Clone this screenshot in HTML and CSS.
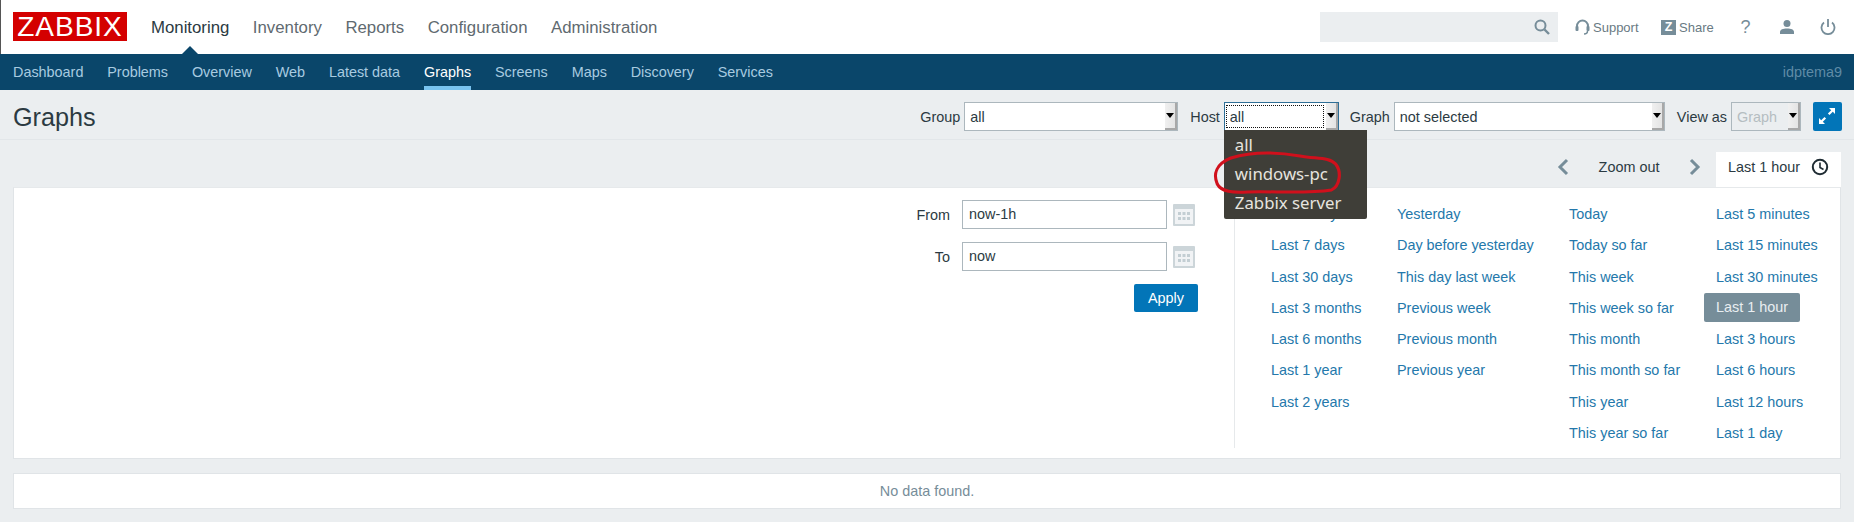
FILE: index.html
```html
<!DOCTYPE html>
<html lang="en">
<head>
<meta charset="utf-8">
<title>Graphs</title>
<link rel="stylesheet" href="styles.css">
</head>
<body>
<header class="top">
  <div class="logo">ZABBIX</div>
  <nav class="main-nav">
    <a class="active">Monitoring</a><a>Inventory</a><a>Reports</a><a>Configuration</a><a>Administration</a>
  </nav>
  <div class="search">
    <svg class="ico" width="18" height="18" viewBox="0 0 18 18"><circle cx="7.5" cy="7.5" r="5" fill="none" stroke="#768d99" stroke-width="2"/><path d="M11.5 11.5L16 16" stroke="#768d99" stroke-width="2.4"/></svg>
  </div>
  <a class="tool support"><svg width="15" height="17" viewBox="0 0 15 17"><path d="M2 11V7a5.500 5.500 0 0 1 11 0v4" fill="none" stroke="#768d99" stroke-width="2"/><rect x="0.500" y="7" width="3" height="5" rx="1" fill="#768d99"/><rect x="11.500" y="7" width="3" height="5" rx="1" fill="#768d99"/><path d="M12.500 12q0 3-3.500 3" fill="none" stroke="#768d99" stroke-width="1.500"/></svg>Support</a>
  <a class="tool share"><span class="zbox">Z</span>Share</a>
  <a class="tool-ico help">?</a>
  <a class="tool-ico"><svg width="16" height="16" viewBox="0 0 16 16"><circle cx="8" cy="4.500" r="3.500" fill="#768d99"/><path d="M1 15v-2c0-2.500 3-3.500 7-3.500s7 1 7 3.500v2z" fill="#768d99"/></svg></a>
  <a class="tool-ico"><svg width="16" height="16" viewBox="0 0 16 16"><path d="M4 3.500a6.500 6.500 0 1 0 8 0" fill="none" stroke="#768d99" stroke-width="1.800"/><path d="M8 0v8" stroke="#768d99" stroke-width="1.800"/></svg></a>
</header>
<nav class="sub-nav">
  <a>Dashboard</a><a>Problems</a><a>Overview</a><a>Web</a><a>Latest data</a><a class="active">Graphs</a><a>Screens</a><a>Maps</a><a>Discovery</a><a>Services</a>
  <span class="server">idptema9</span>
</nav>
<section class="title-row">
  <h1>Graphs</h1>
  <form class="filters">
    <label>Group</label><div class="select w-group"><span>all</span><i class="arrow"></i></div>
    <label class="gap">Host</label>
    <div class="select w-host focus"><span class="dotted">all</span><i class="arrow"></i>
      <ul class="menu"><li>all</li><li>windows-pc</li><li>Zabbix server</li></ul>
      <svg class="scribble" width="132" height="46" viewBox="0 0 126 46" preserveAspectRatio="none"><path d="M18 8C40 1 62 2 84 6C100 9 112 7 118 14C124 22 122 36 114 40C90 44 58 41 34 42C20 43 9 42 5 34C1 24 4 14 18 8Z" fill="none" stroke="#d0101c" stroke-width="3"/></svg>
    </div>
    <label class="gap graph-label">Graph</label><div class="select w-graph"><span>not selected</span><i class="arrow"></i></div>
    <label class="gap">View as</label><div class="select w-view disabled"><span>Graph</span><i class="arrow"></i></div>
    <button type="button" class="fullscreen"><svg width="22" height="22" viewBox="0 0 22 22"><path d="M13 3h6v6l-2.200-2.200-3.300 3.300-1.600-1.600 3.300-3.300zM9 19H3v-6l2.200 2.200 3.300-3.300 1.600 1.600-3.300 3.300z" fill="#fff"/></svg></button>
  </form>
</section>
<div class="tabs">
  <svg width="12" height="18" viewBox="0 0 12 18"><path d="M10 2L3 9l7 7" fill="none" stroke="#768d99" stroke-width="3"/></svg>
  <span class="zoom-out">Zoom out</span>
  <svg width="12" height="18" viewBox="0 0 12 18"><path d="M2 2l7 7-7 7" fill="none" stroke="#768d99" stroke-width="3"/></svg>
  <div class="tab">Last 1 hour<svg width="18" height="18" viewBox="0 0 18 18"><circle cx="9" cy="9" r="7.200" fill="none" stroke="#1f2c33" stroke-width="2"/><path d="M9 4.500V9.500L12.500 11.500" fill="none" stroke="#1f2c33" stroke-width="1.600"/></svg></div>
</div>
<main class="panel">
  <div class="range">
    <div class="range-row"><label>From</label><div class="input">now-1h</div>
      <svg class="cal" width="22" height="22" viewBox="0 0 22 22"><rect x="0" y="0" width="22" height="22" rx="1" fill="#ccd5d9"/><rect x="2" y="5" width="18" height="15" fill="#f1f3f5"/><g fill="#c3ced3"><rect x="5" y="8" width="3" height="3"/><rect x="9.500" y="8" width="3" height="3"/><rect x="14" y="8" width="3" height="3"/><rect x="5" y="13" width="3" height="3"/><rect x="9.500" y="13" width="3" height="3"/><rect x="14" y="13" width="3" height="3"/></g></svg></div>
    <div class="range-row"><label>To</label><div class="input">now</div>
      <svg class="cal" width="22" height="22" viewBox="0 0 22 22"><rect x="0" y="0" width="22" height="22" rx="1" fill="#ccd5d9"/><rect x="2" y="5" width="18" height="15" fill="#f1f3f5"/><g fill="#c3ced3"><rect x="5" y="8" width="3" height="3"/><rect x="9.500" y="8" width="3" height="3"/><rect x="14" y="8" width="3" height="3"/><rect x="5" y="13" width="3" height="3"/><rect x="9.500" y="13" width="3" height="3"/><rect x="14" y="13" width="3" height="3"/></g></svg></div>
    <button type="button" class="apply">Apply</button>
  </div>
  <div class="quick">
    <ul class="c1"><li>Last 2 days</li><li>Last 7 days</li><li>Last 30 days</li><li>Last 3 months</li><li>Last 6 months</li><li>Last 1 year</li><li>Last 2 years</li></ul>
    <ul class="c2"><li>Yesterday</li><li>Day before yesterday</li><li>This day last week</li><li>Previous week</li><li>Previous month</li><li>Previous year</li></ul>
    <ul class="c3"><li>Today</li><li>Today so far</li><li>This week</li><li>This week so far</li><li>This month</li><li>This month so far</li><li>This year</li><li>This year so far</li></ul>
    <ul class="c4"><li>Last 5 minutes</li><li>Last 15 minutes</li><li>Last 30 minutes</li><li class="sel">Last 1 hour</li><li>Last 3 hours</li><li>Last 6 hours</li><li>Last 12 hours</li><li>Last 1 day</li></ul>
  </div>
</main>
<div class="empty">No data found.</div>
</body>
</html>
```
FILE: styles.css
```css
* { box-sizing: border-box; }
html, body { margin: 0; height: 522px; overflow: hidden; }
body { background: #ebeef0; font: 14.4px "Liberation Sans", Arial, sans-serif; color: #2b3a42; }
ul { list-style: none; margin: 0; padding: 0; }

.top { height: 54px; background: #fff; display: flex; align-items: center; padding: 0 6px 0 12px; border-left: 1px solid #555; }
.logo { width: 114px; height: 29px; background: #d40000; color: #fff; font-size: 28px; line-height: 30px; text-align: center; letter-spacing: 1px; margin-top: -1px; }
.main-nav { display: flex; gap: 23.500px; margin: 1px 0 0 24px; font-size: 16.800px; color: #5f6a70; flex: 1; }
.main-nav .active { color: #2b3a42; position: relative; }
.main-nav .active::after { content: ""; position: absolute; left: 50%; margin-left: -9px; top: 28px; border: 9px solid transparent; border-top: 0; border-bottom-color: #0a466a; }
.search { width: 238px; height: 30px; background: #ebeef0; display: flex; justify-content: flex-end; align-items: center; padding-right: 7px; }
.tool { display: flex; align-items: center; font-size: 13px; color: #697a83; }
.support { margin-left: 17px; gap: 3px; width: 71px; }
.share { margin-left: 15px; gap: 3px; width: 55px; }
.zbox { width: 15px; height: 15px; background: #768d99; color: #fff; font-weight: bold; font-size: 12.500px; line-height: 15px; text-align: center; }
.tool-ico { width: 41px; display: flex; justify-content: center; color: #768d99; font-size: 18px; }
.help { margin-left: 9px; }

.sub-nav { height: 36px; background: #0a466a; display: flex; padding-left: 13px; gap: 23.850px; color: #a8cbe0; }
.sub-nav a { line-height: 36px; height: 36px; }
.sub-nav .active { color: #fff; border-bottom: 4px solid #79c3ef; }
.server { margin-left: auto; line-height: 36px; color: #5f8ba6; padding-right: 12px; }

.title-row { height: 50px; display: flex; align-items: center; justify-content: space-between; padding: 0 12px 0 13px; border-bottom: 1px solid #e2e6e9; }
h1 { margin: 6px 0 0; font-size: 25.200px; font-weight: normal; }
.filters { display: flex; align-items: center; margin-top: 4px; }
.filters label { margin-right: 4px; }
.filters .gap { margin-left: 12px; }
.filters .graph-label { margin-left: 11px; }
.select { height: 29px; background: #fff; border: 1px solid #acb7bd; display: flex; align-items: center; padding-left: 5px; position: relative; color: #2b3a42; }
.select > span { flex: 1; }
.arrow { width: 12px; height: 27px; background: linear-gradient(90deg, #f0f0f0, #e4e4e4); border-right: 2px solid #a8a8a8; border-bottom: 2px solid #a8a8a8; position: relative; }
.arrow::after { content: ""; position: absolute; left: 1px; top: 10px; border: 4px solid transparent; border-bottom: 0; border-top: 5px solid #000; }
.w-group { width: 214px; }
.w-host { width: 115px; }
.w-graph { width: 271px; }
.w-view { width: 70px; }
.focus { border-color: #2f6f97; padding-left: 1px; }
.dotted { border: 1px dotted #111; height: 23px; line-height: 22px; padding-left: 3px; margin-right: 2px; }
.disabled { background: #ebeef0; color: #b5bdc1; }
.fullscreen { width: 29px; height: 29px; margin-left: 12px; background: #0275b8; border: 0; border-radius: 2px; padding: 3px; display: flex; }

.menu { position: absolute; left: -1px; top: 27px; width: 143px; height: 89px; background: #3f3e38; color: #e6e4df; font: 16.800px "Noto Sans", sans-serif; border-radius: 0 0 2px 2px; padding: 0 0 0 11px; z-index: 5; }
.menu li { height: 29px; line-height: 29px; }
.scribble { position: absolute; left: -13px; top: 47px; z-index: 6; }

.tabs { height: 47px; display: flex; align-items: flex-end; justify-content: flex-end; padding-right: 13px; }
.tabs > svg { margin-bottom: 11px; }
.zoom-out { width: 120px; text-align: center; line-height: 35px; padding-bottom: 4px; height: 37px; }
.tabs > svg:last-of-type { margin-right: 15px; }
.tab { width: 125px; height: 35px; background: #fff; padding: 0 0 6px 12px; display: flex; gap: 11px; align-items: center; white-space: nowrap; }

.panel { margin: 0 13px; height: 272px; background: #fff; border: 1px solid #e0e4e7; border-top-color: #e6e9eb; display: flex; padding-top: 10px; position: relative; }
.range { width: 1221px; height: 250px; border-right: 1px solid #e6e9eb; padding-right: 36px; display: flex; flex-direction: column; align-items: flex-end; padding-top: 2px; }
.range-row { display: flex; align-items: center; height: 29px; margin: 0 3px 13px 0; }
.range-row label { margin-right: 12px; }
.input { width: 205px; height: 29px; border: 1px solid #acb7bd; line-height: 27px; padding-left: 6px; }
.cal { margin-left: 6px; }
.apply { width: 64px; height: 28px; background: #0275b8; color: #fff; font: 14.4px "Liberation Sans", sans-serif; border: 0; border-radius: 2px; }
.quick { display: flex; color: #2478ab; margin-left: 36px; }
.quick ul { flex: none; }
.quick li { height: 31.250px; line-height: 33px; white-space: nowrap; }
.c1 { width: 126px; }
.c2 { width: 172px; }
.c3 { width: 147px; }
.c4 { width: 120px; }
.quick .sel { background: #768d99; color: #e9eef1; margin-left: -12px; padding-left: 12px; width: 96px; height: 29px; line-height: 29px; margin-top: 1px; margin-bottom: 1.250px; border-radius: 2px; }

.empty { margin: 14px 13px 0; height: 36px; background: #fff; border: 1px solid #e0e4e7; text-align: center; line-height: 35px; color: #768d99; }
```
